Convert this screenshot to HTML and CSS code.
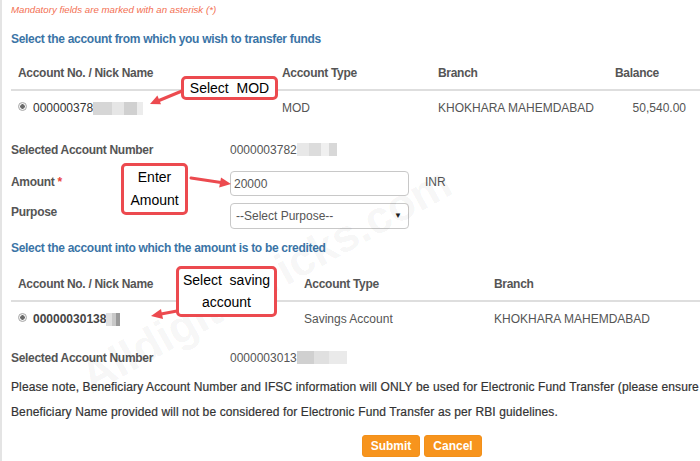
FILE: index.html
```html
<!DOCTYPE html>
<html>
<head>
<meta charset="utf-8">
<link rel="stylesheet" href="styles.css">
</head>
<body>
<div class="screen">
  <div class="page">
    <p class="mandatory">Mandatory fields are marked with an asterisk (*)</p>
    <h2 class="section-title">Select the account from which you wish to transfer funds</h2>

    <div class="acc-table from">
      <div class="thead">
        <div class="cell">Account No. / Nick Name</div>
        <div class="cell">Account Type</div>
        <div class="cell">Branch</div>
        <div class="cell">Balance</div>
      </div>
      <div class="trow">
        <div class="cell acc"><span class="radio"></span>000000378<span class="blur b1"></span></div>
        <div class="cell">MOD</div>
        <div class="cell">KHOKHARA MAHEMDABAD</div>
        <div class="cell num">50,540.00</div>
      </div>
    </div>

    <div class="field sel1">
      <div class="field-label">Selected Account Number</div>
      <div class="field-value">0000003782<span class="blur b2"></span></div>
    </div>

    <div class="field amount">
      <div class="field-label">Amount <span class="req">*</span></div>
      <input class="text-input" type="text" value="20000">
      <div class="unit">INR</div>
    </div>

    <div class="field purpose">
      <div class="field-label">Purpose</div>
      <div class="select"><span>--Select Purpose--</span><span class="caret">&#9660;</span></div>
    </div>

    <h2 class="section-title second">Select the account into which the amount is to be credited</h2>

    <div class="acc-table to">
      <div class="thead">
        <div class="cell">Account No. / Nick Name</div>
        <div class="cell">Account Type</div>
        <div class="cell">Branch</div>
      </div>
      <div class="trow">
        <div class="cell acc strong"><span class="radio"></span>00000030138<span class="blur b3"></span></div>
        <div class="cell">Savings Account</div>
        <div class="cell">KHOKHARA MAHEMDABAD</div>
      </div>
    </div>

    <div class="field sel2">
      <div class="field-label">Selected Account Number</div>
      <div class="field-value">0000003013<span class="blur b4"></span></div>
    </div>

    <div class="note">
      <p>Please note, Beneficiary Account Number and IFSC information will ONLY be used for Electronic Fund Transfer (please ensure</p>
      <p>Beneficiary Name provided will not be considered for Electronic Fund Transfer as per RBI guidelines.</p>
    </div>

    <div class="actions">
      <button class="btn">Submit</button>
      <button class="btn">Cancel</button>
    </div>
  </div>

  <div class="watermark">Alldigitaltricks.com</div>

  <svg class="arrows" width="700" height="461" viewBox="0 0 700 461">
    <g stroke="#ec4a4f" stroke-width="3" fill="#ec4a4f" stroke-linecap="round">
      <line x1="182" y1="91" x2="159" y2="100.5"/>
      <polygon stroke="none" points="150,104 161,104.2 157.4,95.6"/>
      <line x1="191" y1="178" x2="221" y2="182.5"/>
      <polygon stroke="none" points="231,184 219.2,187.6 221,177.6"/>
      <line x1="177" y1="311" x2="161" y2="314"/>
      <polygon stroke="none" points="151,316 163,319 161,309"/>
    </g>
  </svg>

  <div class="callout c1">Select&nbsp;&nbsp;MOD</div>
  <div class="callout c2">Enter<br>Amount</div>
  <div class="callout c3">Select&nbsp;&nbsp;saving<br>account</div>
</div>
</body>
</html>
```

FILE: styles.css
```css
html, body {
  margin: 0;
  padding: 0;
  background: #fff;
}

body {
  font-family: "Liberation Sans", Arial, sans-serif;
  font-size: 12px;
  color: #555;
}

.screen {
  position: relative;
  width: 700px;
  height: 461px;
  overflow: hidden;
}

.page {
  box-sizing: border-box;
  height: 461px;
  border-left: 2px solid #e4e4e4;
  padding-left: 9px;
}

.mandatory {
  margin: 0;
  padding-top: 3px;
  line-height: 14px;
  font-size: 9.7px;
  font-style: italic;
  color: #f36f52;
}

.section-title {
  margin: 15px 0 0;
  font-size: 12px;
  line-height: 14px;
  font-weight: bold;
  letter-spacing: -0.3px;
  color: #3a74a6;
}

.section-title.second {
  margin-top: 12px;
}

.acc-table {
  margin-top: 20px;
}

.acc-table .thead,
.acc-table .trow {
  display: grid;
  line-height: 14px;
}

.acc-table.from .thead,
.acc-table.from .trow {
  grid-template-columns: 264px 156px 177px 1fr;
}

.acc-table.to .thead,
.acc-table.to .trow {
  grid-template-columns: 286px 190px 1fr;
}

.acc-table.to {
  margin-top: 22px;
}

.thead {
  padding-bottom: 9px;
  border-bottom: 2px solid #dedede;
  font-weight: bold;
  letter-spacing: -0.3px;
  color: #555;
}

.trow {
  padding-top: 10px;
}

.cell {
  padding-left: 7px;
  white-space: nowrap;
}

.cell.num {
  text-align: right;
  padding-right: 14px;
}

.cell.acc {
  color: #333;
  display: flex;
  align-items: center;
}

.cell.acc.strong {
  font-weight: bold;
  color: #444;
}

.radio {
  display: inline-block;
  box-sizing: border-box;
  width: 9px;
  height: 9px;
  margin-right: 6px;
  margin-top: -4px;
  border-radius: 50%;
  border: 1px solid #a8a8a8;
  background: radial-gradient(circle, #6a6a6a 0 2px, #f2f2f2 2.5px);
}

.blur {
  display: inline-block;
  height: 13px;
  vertical-align: -2px;
}

.b1 {
  width: 50px;
  background: linear-gradient(90deg, #d6d6d6 0 38%, #e6e6e6 38% 62%, #d0d0d0 62% 88%, #ececec 88%);
}

.b2 {
  width: 40px;
  background: linear-gradient(90deg, #e8e8e8 0 30%, #dcdcdc 30% 60%, #f0f0f0 60% 80%, #d8d8d8 80%);
}

.b3 {
  width: 14px;
  background: linear-gradient(90deg, #e0e0e0 0 40%, #c8c8c8 40% 70%, #9a9a9a 70%);
}

.b4 {
  width: 50px;
  background: linear-gradient(90deg, #d0d0d0 0 35%, #e0e0e0 35% 65%, #eaeaea 65%);
}

.field {
  display: flex;
  align-items: flex-start;
  line-height: 14px;
}

.field-label {
  width: 219px;
  flex: none;
  font-weight: bold;
  letter-spacing: -0.3px;
  color: #555;
}

.field-value {
  color: #555;
}

.sel1 {
  margin-top: 28px;
}

.amount {
  margin-top: 14px;
}

.amount .field-label,
.amount .unit {
  padding-top: 4px;
}

.req {
  color: #e8453c;
}

.text-input {
  box-sizing: border-box;
  width: 179px;
  height: 25px;
  margin: 0;
  padding: 0 0 0 3px;
  border: 1px solid #c8c8c8;
  border-radius: 4px;
  font-family: "Liberation Sans", Arial, sans-serif;
  font-size: 12px;
  color: #555;
  outline: none;
}

.unit {
  margin-left: 16px;
  color: #555;
}

.purpose {
  margin-top: 7px;
}

.purpose .field-label {
  padding-top: 2px;
}

.select {
  box-sizing: border-box;
  width: 179px;
  height: 26px;
  border: 1px solid #c8c8c8;
  border-radius: 4px;
  padding: 0 6px 0 5px;
  display: flex;
  align-items: center;
  justify-content: space-between;
  color: #555;
}

.caret {
  font-size: 8px;
  color: #222;
}

.sel2 {
  margin-top: 25px;
}

.note {
  margin-top: 10px;
  color: #333;
  line-height: 25px;
  letter-spacing: 0.12px;
  white-space: nowrap;
  -webkit-text-stroke: 0.2px #333;
}

.note p {
  margin: 0;
}

.actions {
  margin-top: 10px;
  padding-left: 351px;
  display: flex;
  gap: 4px;
}

.btn {
  box-sizing: border-box;
  width: 58px;
  height: 22px;
  margin: 0;
  padding: 0;
  border: 1px solid #f2901a;
  border-radius: 3px;
  background: #f7941d;
  color: #fff;
  font-family: "Liberation Sans", Arial, sans-serif;
  font-size: 12px;
  font-weight: bold;
}

.watermark {
  position: absolute;
  left: 266px;
  top: 280px;
  transform: translate(-50%, -50%) rotate(-29deg);
  white-space: nowrap;
  font-size: 45px;
  font-weight: bold;
  color: rgba(0, 0, 0, 0.05);
  pointer-events: none;
}

.arrows {
  position: absolute;
  left: 0;
  top: 0;
}

.callout {
  position: absolute;
  box-sizing: border-box;
  border: 3px solid #ec4a4f;
  border-radius: 5px;
  background: #fff;
  color: #000;
  font-size: 14px;
  text-align: center;
  white-space: nowrap;
}

.c1 {
  left: 181px;
  top: 76px;
  width: 97px;
  height: 24px;
  line-height: 18px;
}

.c2 {
  left: 121px;
  top: 163px;
  width: 67px;
  height: 52px;
  line-height: 23px;
}

.c3 {
  left: 176px;
  top: 266px;
  width: 101px;
  height: 51px;
  line-height: 22px;
}
```
